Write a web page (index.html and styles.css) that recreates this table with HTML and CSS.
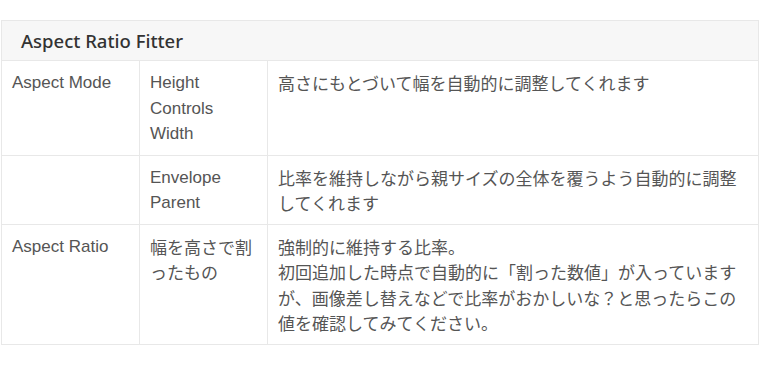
FILE: index.html
```html
<!DOCTYPE html>
<html lang="ja">
<head>
    <meta charset="UTF-8">
    <meta name="viewport" content="width=device-width, initial-scale=1.0">
    <title>Aspect Ratio Fitter</title>
    <link rel="stylesheet" href="styles.css">
</head>
<body>
<div class="wrap">
    <table class="prop-table">
        <colgroup>
            <col class="col-name">
            <col class="col-value">
            <col class="col-desc">
        </colgroup>
        <thead>
            <tr>
                <th colspan="3">Aspect Ratio Fitter</th>
            </tr>
        </thead>
        <tbody>
            <tr>
                <td>Aspect Mode</td>
                <td>Height Controls Width</td>
                <td class="ja">高さにもとづいて幅を自動的に調整してくれます</td>
            </tr>
            <tr>
                <td></td>
                <td>Envelope Parent</td>
                <td class="ja">比率を維持しながら親サイズの全体を覆うよう自動的に調整してくれます</td>
            </tr>
            <tr>
                <td>Aspect Ratio</td>
                <td class="ja">幅を高さで割ったもの</td>
                <td class="ja">強制的に維持する比率。<br>初回追加した時点で自動的に「割った数値」が入っていますが、画像差し替えなどで比率がおかしいな？と思ったらこの値を確認してみてください。</td>
            </tr>
        </tbody>
    </table>
</div>
</body>
</html>
```

FILE: styles.css
```css
*{
    margin: 0;
    padding: 0;
}
body{
    background: #fff;
    font-family: "Liberation Sans", "Noto Sans CJK JP", sans-serif;
    color: #555;
}
.wrap{
    padding: 20px 1px 0 1px;
}
.prop-table{
    width: 758px;
    border-collapse: collapse;
    table-layout: fixed;
}
.col-name{
    width: 138px;
}
.col-value{
    width: 128px;
}
.prop-table th{
    height: 39px;
    padding: 0 19px;
    background: #f7f7f7;
    border: 1px solid #e8e8e8;
    text-align: left;
    font-family: "Noto Sans", "Liberation Sans", sans-serif;
    font-size: 18.5px;
    font-weight: 500;
    color: #333;
}
.prop-table td{
    padding: 9px 10px 8px;
    border: 1px solid #e8e8e8;
    font-size: 17px;
    line-height: 25.5px;
    vertical-align: top;
}
/* 日本語のセルは CJK フォントだけで組む（行の高さが揃うように） */
.prop-table td.ja{
    font-family: "Noto Sans CJK JP", sans-serif;
}
```
